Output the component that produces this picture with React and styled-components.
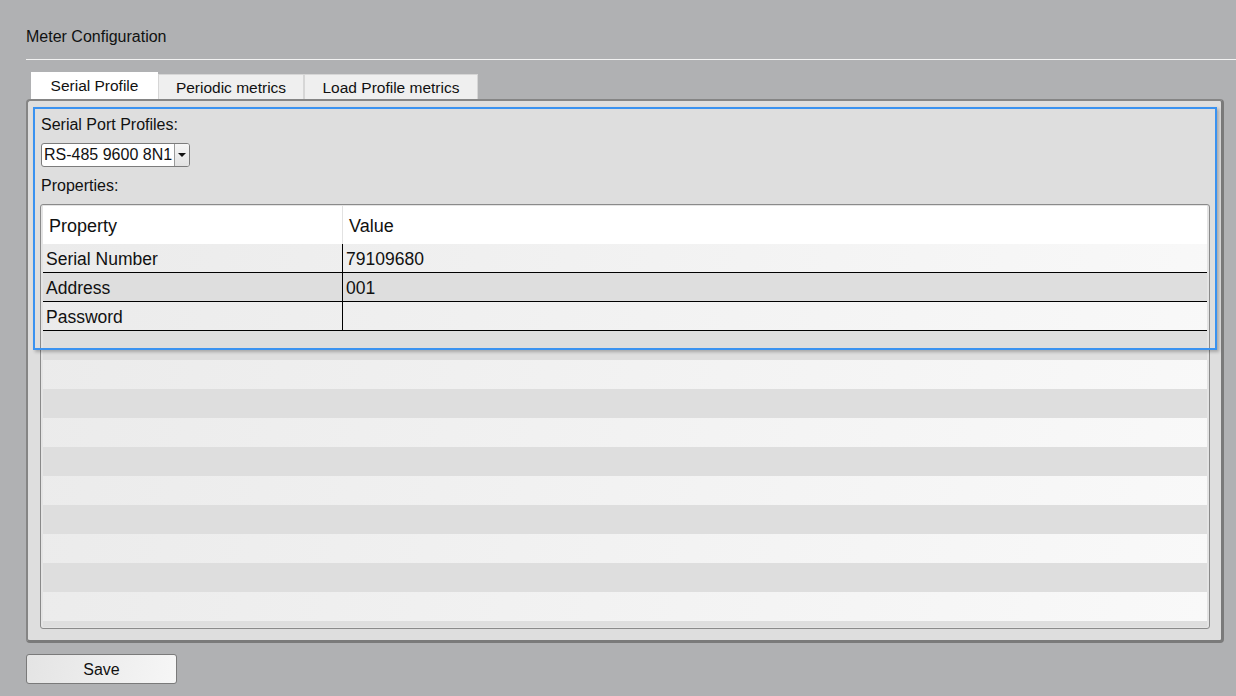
import React from "react";
import styled, { createGlobalStyle } from "styled-components";

const Global = createGlobalStyle`
  html, body { margin: 0; padding: 0; }
  body {
    background: #b0b1b3;
    font-family: "Liberation Sans", Arial, sans-serif;
    color: #111;
    width: 1236px;
    height: 696px;
    overflow: hidden;
  }
`;

const Page = styled.div`
  display: flex;
  flex-direction: column;
  padding-left: 26px;
  height: 696px;
  box-sizing: border-box;
`;

const Header = styled.div`
  height: 60px;
  box-sizing: border-box;
  padding-top: 28px;
  border-bottom: 1px solid #f2f2f2;
  font-size: 16px;
  line-height: 18px;
`;

const TabRow = styled.div`
  display: flex;
  align-items: flex-end;
  margin-top: 12px;
  padding-left: 5px;
  height: 27px;
`;

const Tab = styled.div`
  width: ${(p) => p.w}px;
  height: ${(p) => (p.active ? 27 : 25)}px;
  box-sizing: border-box;
  background: ${(p) => (p.active ? "#ffffff" : "#efefef")};
  border: 1px solid ${(p) => (p.active ? "#ffffff" : "#d6d6d6")};
  border-bottom: none;
  display: flex;
  align-items: center;
  justify-content: center;
  font-size: 15.5px;
  padding-top: ${(p) => (p.active ? 0 : 2)}px;
`;

const Panel = styled.div`
  position: relative;
  margin-right: 12px;
  height: 544px;
  box-sizing: border-box;
  background: #dedede;
  border: 2px solid #858585;
  border-right-width: 3px;
  border-bottom-width: 3px;
  border-right-color: #7a7a7a;
  border-bottom-color: #7a7a7a;
  border-radius: 4px;
  padding: 14px 11px 11px 12px;
  display: flex;
  flex-direction: column;
`;

const FocusRing = styled.div`
  position: absolute;
  left: 5px;
  right: 4px;
  top: 6px;
  height: 243px;
  box-sizing: border-box;
  border: 2px solid #3a92f0;
  box-shadow: 2px 2px 3px rgba(0, 0, 0, 0.25);
  pointer-events: none;
`;

const Label = styled.div`
  font-size: 16px;
  line-height: 20px;
  padding-left: 1px;
  margin-top: ${(p) => p.mt || 0}px;
`;

const Select = styled.div`
  margin-top: 8px;
  margin-left: 1px;
  align-self: flex-start;
  display: flex;
  height: 24px;
  box-sizing: border-box;
  border: 1px solid #7c7c7c;
  border-radius: 3px;
  background: #fff;
  overflow: hidden;
`;

const SelectText = styled.div`
  font-size: 16px;
  line-height: 22px;
  padding: 0 2px 0 2px;
  color: #111;
`;

const SelectButton = styled.div`
  width: 15px;
  box-sizing: border-box;
  border-left: 1px solid #9a9a9a;
  background: linear-gradient(#f6f6f6, #e2e2e2);
  display: flex;
  align-items: center;
  justify-content: center;
  &::after {
    content: "";
    border-left: 4px solid transparent;
    border-right: 4px solid transparent;
    border-top: 4px solid #111;
  }
`;

const TableBox = styled.div`
  margin-top: 8px;
  flex: 1;
  min-height: 0;
  box-sizing: border-box;
  border: 1px solid #8a8a8a;
  border-radius: 3px;
  padding: 1px 2px 1px 2px;
  background: #e4e4e4;
  display: flex;
  flex-direction: column;
  overflow: hidden;
`;

const Body = styled.div`
  flex: 1;
  background: linear-gradient(100deg, #ebebeb 0%, #f2f2f2 50%, #f9f9f9 100%);
  overflow: hidden;
  display: flex;
  flex-direction: column;
`;

const HeadRow = styled.div`
  display: grid;
  grid-template-columns: 299px 1fr;
  height: 38px;
  background: #fff;
  flex-shrink: 0;
`;

const HeadCell = styled.div`
  font-size: 18px;
  display: flex;
  align-items: center;
  padding-left: 6px;
  padding-top: 3px;
  border-left: ${(p) => (p.first ? "none" : "1px solid #e2e2e2")};
`;

const Row = styled.div`
  display: grid;
  grid-template-columns: 299px 1fr;
  height: 29px;
  flex-shrink: 0;
  box-sizing: border-box;
  border-bottom: ${(p) => (p.line ? "1px solid #000" : "none")};
  background: ${(p) => (p.dark ? "#dedede" : "transparent")};
`;

const Cell = styled.div`
  font-size: 17.5px;
  display: flex;
  align-items: center;
  padding-left: 3px;
  padding-top: 2px;
  border-left: ${(p) => (p.first ? "none" : "1px solid #000")};
`;

const SaveButton = styled.button`
  margin-top: 11px;
  width: 151px;
  height: 30px;
  box-sizing: border-box;
  border: 1px solid #7a7a7a;
  border-radius: 3px;
  background: linear-gradient(100deg, #e4e4e4, #f6f6f6);
  font-family: "Liberation Sans", Arial, sans-serif;
  font-size: 16px;
  color: #111;
  padding: 2px 0 0 0;
`;

const data = [
  ["Serial Number", "79109680"],
  ["Address", "001"],
  ["Password", ""],
];

export default function App() {
  return (
    <>
      <Global />
      <Page>
        <Header>Meter Configuration</Header>
        <TabRow>
          <Tab active w={127}>Serial Profile</Tab>
          <Tab w={146}>Periodic metrics</Tab>
          <Tab w={174}>Load Profile metrics</Tab>
        </TabRow>
        <Panel>
          <Label>Serial Port Profiles:</Label>
          <Select>
            <SelectText>RS-485 9600 8N1</SelectText>
            <SelectButton />
          </Select>
          <Label mt={9}>Properties:</Label>
          <TableBox>
            <HeadRow>
              <HeadCell first>Property</HeadCell>
              <HeadCell>Value</HeadCell>
            </HeadRow>
            <Body>
              {data.map(([k, v], i) => (
                <Row key={k} line dark={i % 2 === 1}>
                  <Cell first>{k}</Cell>
                  <Cell>{v}</Cell>
                </Row>
              ))}
              {Array.from({ length: 11 }).map((_, i) => (
                <Row key={"f" + i} dark={i % 2 === 0} />
              ))}
            </Body>
          </TableBox>
          <FocusRing />
        </Panel>
        <SaveButton>Save</SaveButton>
      </Page>
    </>
  );
}
